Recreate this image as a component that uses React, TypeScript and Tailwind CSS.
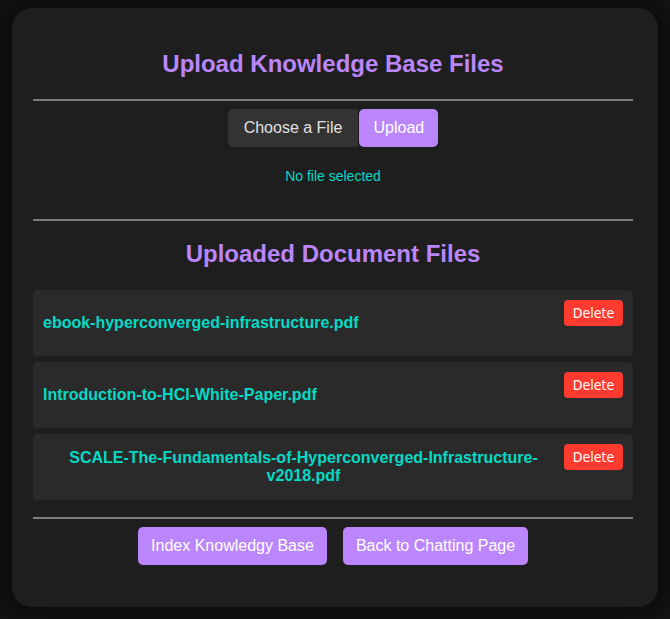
export default function App() {
  const files = [
    "ebook-hyperconverged-infrastructure.pdf",
    "Introduction-to-HCI-White-Paper.pdf",
    "SCALE-The-Fundamentals-of-Hyperconverged-Infrastructure-v2018.pdf",
  ];
  return (
    <div className="min-h-screen bg-[#141414] pt-[8px] px-[12px] pb-[13px]" style={{ fontFamily: '"Liberation Sans", Arial, sans-serif' }}>
      <div className="w-[646px] rounded-[20px] bg-[#1e1e1e] shadow-[0_0_24px_10px_rgba(0,0,0,0.45)] pl-[21px] pr-[25px] pt-[42px] pb-[42px]">
        <h2 className="text-center text-[24px] leading-[28px] font-bold text-[#bb86fc]">Upload Knowledge Base Files</h2>
        <div className="mt-[21px] border-t-2 border-[#7d7d7d]" />
        <div className="mt-[8px] flex justify-center">
          <button className="h-[38px] px-[16px] bg-[#333333] text-[#e0e0e0] text-[16px] rounded-l-[5px]">Choose a File</button>
          <button className="h-[38px] w-[79px] ml-[1px] bg-[#bb86fc] text-white text-[16px] rounded-[5px]">Upload</button>
        </div>
        <p className="mt-[21px] text-center text-[14px] leading-[16px] text-[#03dac6]">No file selected</p>
        <div className="mt-[35px] border-t-2 border-[#7d7d7d]" />
        <h2 className="mt-[19px] text-center text-[24px] leading-[28px] font-bold text-[#bb86fc]">Uploaded Document Files</h2>
        <div className="mt-[22px] flex flex-col gap-[6px]">
          {files.map((f) => (
            <div key={f} className="h-[66px] rounded-[5px] bg-[#2a2a2a] flex items-start justify-between px-[10px] pt-[10px]">
              <p className="self-center -mt-[10px] text-center text-[16px] leading-[18px] font-bold text-[#03dac6]">{f}</p>
              <button className="shrink-0 h-[26px] w-[59px] rounded-[4px] bg-[#ff3b30] text-white text-[14px]" style={{ fontFamily: '"DejaVu Sans Condensed", "Liberation Sans", sans-serif' }}>Delete</button>
            </div>
          ))}
        </div>
        <div className="mt-[17px] border-t-2 border-[#7d7d7d]" />
        <div className="mt-[8px] flex justify-center gap-[16px]">
          <button className="h-[38px] w-[189px] rounded-[5px] bg-[#bb86fc] text-white text-[16px]">Index Knowledgy Base</button>
          <button className="h-[38px] w-[185px] rounded-[5px] bg-[#bb86fc] text-white text-[16px]">Back to Chatting Page</button>
        </div>
      </div>
    </div>
  );
}
